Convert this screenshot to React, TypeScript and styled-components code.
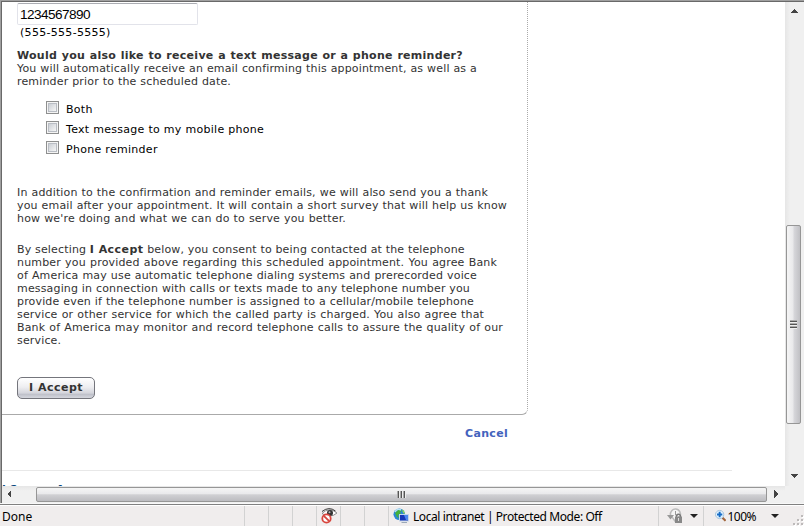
import React from "react";
import styled, { createGlobalStyle } from "styled-components";

const Global = createGlobalStyle`
  * { box-sizing: border-box; }
  html, body { margin: 0; padding: 0; overflow: hidden; }
`;

const Window = styled.div`
  width: 804px;
  height: 527px;
  display: flex;
  flex-direction: column;
  overflow: hidden;
  background: #f0eded;
`;

const Frame = styled.div`
  height: 503px;
  display: grid;
  grid-template-columns: 783px 17px;
  grid-template-rows: 484px 16px;
  border-top: 1px solid #a0a0a0;
  border-left: 1px solid #a0a0a0;
  box-shadow: inset 1px 1px 0 #696969;
  padding: 1px 0 0 1px;
  background: #f0f0f0;
`;

const Viewport = styled.main`
  background: #fff;
  overflow: hidden;
  display: flex;
  flex-direction: column;
  font: 11px/13px "DejaVu Sans", sans-serif;
  color: #333;
`;

const Panel = styled.section`
  width: 526px;
  height: 413px;
  flex: none;
  padding: 1px 0 0 15px;
  display: flex;
  flex-direction: column;
  align-items: flex-start;
  border-right: 1px dotted #aaa;
  border-bottom: 1px solid #aaa;
  border-bottom-right-radius: 6px;
`;

const PhoneInput = styled.input`
  width: 181px;
  height: 22px;
  margin: 0;
  padding: 0 2px;
  border: 1px solid #e2e3ea;
  border-top-color: #abadb3;
  border-radius: 2px;
  outline: 0;
  font: 13.6px "Liberation Sans", sans-serif;
  letter-spacing: -0.57px;
  color: #000;
`;

const Hint = styled.div`
  padding-left: 3px;
  margin-top: 1px;
  letter-spacing: 0.3px;
  color: #000;
`;

const TextBlock = styled.div<{ $gap: number }>`
  margin-top: ${(p) => p.$gap}px;
`;

const Line = styled.div<{ $w: number; $bold?: boolean }>`
  width: ${(p) => p.$w}px;
  height: 13px;
  white-space: nowrap;
  text-align: justify;
  text-align-last: justify;
  font-weight: ${(p) => (p.$bold ? 700 : 400)};
  letter-spacing: ${(p) => (p.$bold ? 0.28 : 0.16)}px;

  b {
    letter-spacing: 0.45px;
  }
`;

const Options = styled.div`
  margin: 10px 0 0 29px;
  display: flex;
  flex-direction: column;
`;

const Option = styled.label`
  height: 20px;
  display: flex;
  align-items: center;
  gap: 7px;
  letter-spacing: 0.29px;
  color: #000;
`;

const Check = styled.span`
  width: 13px;
  height: 13px;
  margin-top: -1px;
  border: 1px solid #8e8f8f;
  background: linear-gradient(135deg, #cbcfd5, #f6f6f6) content-box, #f4f4f4;
  padding: 2px;
  box-shadow: inset 0 0 0 1px #f4f4f4, inset 0 0 0 2px #b9bdc4;
`;

const OptionText = styled.span`
  padding-top: 2px;
`;

const AcceptButton = styled.button`
  width: 78px;
  height: 22px;
  margin: 30px 0 0;
  padding: 0 0 2px;
  border: 1px solid #74757c;
  border-radius: 5px;
  background: linear-gradient(#fff, #eeeef1 45%, #d4d5dc 75%, #bfc1ca 82%, #d5d7de);
  font: bold 11px/13px "DejaVu Sans", sans-serif;
  letter-spacing: 0.5px;
  color: #333;
`;

const CancelLink = styled.a`
  width: 506px;
  margin-top: 12px;
  text-align: right;
  font-weight: 700;
  letter-spacing: 0.3px;
  color: #4363bd;
`;

const Rule = styled.div`
  width: 730px;
  height: 1px;
  flex: none;
  margin-top: 30px;
  background: #e8e8e8;
`;

const Footer = styled.div`
  margin-top: 12px;
  height: 13px;
  flex: none;
  white-space: pre;
  font-weight: 700;
  color: #0a4a80;
`;

const VBar = styled.div`
  display: flex;
  flex-direction: column;
  align-items: center;
  background: linear-gradient(90deg, #e6e6e6, #f0f0f0 30%, #f0f0f0);
  padding: 5px 0 6px;
`;

const VThumb = styled.div`
  width: 15px;
  height: 199px;
  margin: 210px 0 auto;
  flex: none;
  display: flex;
  align-items: center;
  justify-content: center;
  border: 1px solid #969696;
  border-radius: 2px;
  background: linear-gradient(90deg, #f5f5f5, #e9e9eb 45%, #d6d6da 55%, #c0c0c4);
`;

const HBar = styled.div`
  display: flex;
  align-items: center;
  background: linear-gradient(#e6e6e6, #f0f0f0 30%, #f0f0f0);
  padding: 0 5px 0 4px;
`;

const HThumb = styled.div`
  width: 731px;
  height: 15px;
  margin: 0 auto 0 22px;
  flex: none;
  display: flex;
  align-items: center;
  justify-content: center;
  border: 1px solid #969696;
  border-radius: 2px;
  background: linear-gradient(#f5f5f5, #e9e9eb 45%, #d0d0d3 52%, #bcbcc0);
`;

const StatusBar = styled.footer`
  height: 24px;
  display: flex;
  border-top: 1px solid #f8f8f8;
  box-shadow: inset 0 1px 0 #808080, inset 0 2px 0 #fff, inset 0 -1px 0 #fff;
  padding-top: 2px;
  font: 12px/21px "Noto Sans", sans-serif;
  color: #000;
`;

const Cell = styled.div<{ $w: number; $line?: boolean; $pad?: number }>`
  width: ${(p) => p.$w}px;
  height: 20px;
  flex: none;
  display: flex;
  align-items: center;
  padding-left: ${(p) => p.$pad ?? 0}px;
  border-left: ${(p) => (p.$line ? "1px solid #d2d2d2" : "0")};
  white-space: nowrap;
`;

const StatusText = styled.span<{ $track?: number; $gap?: number }>`
  letter-spacing: ${(p) => p.$track ?? 0}px;
  margin-left: ${(p) => p.$gap ?? 0}px;
`;

const Drop = styled.i<{ $gap: number }>`
  margin-left: ${(p) => p.$gap}px;
  border: 4px solid transparent;
  border-top-color: #222;
  border-bottom: 0;
`;

const Arrow = ({ d }: { d: string }) => (
  <svg width="8" height="8" viewBox="0 0 8 8" shapeRendering="crispEdges"><path d={d} fill="#444" /></svg>
);

const Grip = ({ vertical }: { vertical?: boolean }) => (
  <svg width="9" height="9" viewBox="0 0 9 9" shapeRendering="crispEdges">
    <g transform={vertical ? "rotate(90 4.5 4.5)" : undefined}>
      {[0, 3, 6].map((x) => (
        <React.Fragment key={x}>
          <rect x={x} y="1" width="1" height="7" fill="#aaa" />
          <rect x={x + 1} y="1" width="1" height="7" fill="#555" />
          <rect x={x + 2} y="1" width="1" height="7" fill="#eee" />
        </React.Fragment>
      ))}
    </g>
  </svg>
);

const PrivacyIcon = () => (
  <svg width="17" height="16" viewBox="0 0 17 16">
    <path d="M1 5.500Q8-1.500 16 5Q9 11 1 5.500Z" fill="#fff" stroke="#777" strokeWidth=".8" />
    <path d="M1 3.500Q8-2 14.500 3" fill="none" stroke="#222" strokeWidth=".9" />
    <circle cx="9" cy="5" r="3" fill="#333" />
    <circle cx="8.500" cy="4.200" r="1" fill="#bbb" />
    <circle cx="5.500" cy="10.500" r="4.200" fill="#fff" stroke="#d8453d" strokeWidth="1.800" />
    <path d="M2.800 7.800L8.200 13.200" stroke="#d8453d" strokeWidth="1.800" />
  </svg>
);

const IntranetIcon = () => (
  <svg width="16" height="16" viewBox="0 0 16 16">
    <circle cx="6.300" cy="6.300" r="5.800" fill="#2c88d4" />
    <path d="M6 1L9 3L7 4L8 6L5 7L6 10L4 9L2 5Z" fill="#45b13b" />
    <path d="M9 1Q12 3 12 6L10 5Z" fill="#8bd852" />
    <path d="M2 4Q4 0 8 2" stroke="#b9e2f5" strokeWidth="1.500" fill="none" />
    <rect x="6.500" y="6.500" width="9" height="6.500" fill="#1637b8" stroke="#c5d5e8" />
    <path d="M11 7H15V12H13Z" fill="#4c86ef" />
    <path d="M9 14H14V15H8Z" fill="#9ba8b8" />
  </svg>
);

const SecurityIcon = () => (
  <svg width="16" height="16" viewBox="0 0 16 16">
    <path d="M3.500 7A5 5 0 1 1 13 8L8 13Z" fill="#f5f5f5" stroke="#bbb" strokeWidth="1.500" />
    <path d="M0 7H7L3.500 11.500Z" fill="#999" />
    <path d="M8.500 3V7H11" stroke="#999" fill="none" />
    <path d="M9.500 9V7.500Q11.500 5 13.500 7.500V9" fill="none" stroke="#777" strokeWidth="1.300" />
    <rect x="8" y="8.500" width="7" height="6.500" fill="#888" />
    <path d="M11.500 10V13" stroke="#ddd" />
  </svg>
);

const ZoomIcon = () => (
  <svg width="13" height="14" viewBox="0 0 13 14">
    <path d="M8.500 9L12 12.500" stroke="#a2663d" strokeWidth="2.500" />
    <circle cx="5.300" cy="5.300" r="4.700" fill="#e5f4ff" stroke="#9fbdd5" />
    <path d="M5.300 2.300V8.300M2.300 5.300H8.300" stroke="#176cc5" strokeWidth="2.200" />
  </svg>
);

const ResizeGrip = () => (
  <svg width="11" height="11" viewBox="0 0 11 11" shapeRendering="crispEdges">
    {[[8, 0], [4, 4], [8, 4], [0, 8], [4, 8], [8, 8]].map(([x, y]) => (
      <React.Fragment key={`${x}-${y}`}>
        <rect x={x + 1} y={y + 1} width="2" height="2" fill="#fff" />
        <rect x={x} y={y} width="2" height="2" fill="#bdbaba" />
      </React.Fragment>
    ))}
  </svg>
);

const Corner = styled.div`
  display: flex;
  align-self: flex-end;
  margin-left: 14px;
`;

const surveyLines: [number, string][] = [
  [471, "In addition to the confirmation and reminder emails, we will also send you a thank"],
  [490, "you email after your appointment. It will contain a short survey that will help us know"],
  [329, "how we're doing and what we can do to serve you better."],
];

const consentLines: [number, React.ReactNode][] = [
  [447, <>By selecting <b>I Accept</b> below, you consent to being contacted at the telephone</>],
  [480, "number you provided above regarding this scheduled appointment. You agree Bank"],
  [460, "of America may use automatic telephone dialing systems and prerecorded voice"],
  [453, "messaging in connection with calls or texts made to any telephone number you"],
  [457, "provide even if the telephone number is assigned to a cellular/mobile telephone"],
  [467, "service or other service for which the called party is charged. You also agree that"],
  [486, "Bank of America may monitor and record telephone calls to assure the quality of our"],
  [45, "service."],
];

export default function App() {
  return (
    <Window>
      <Global />
      <Frame>
        <Viewport>
          <Panel>
            <PhoneInput defaultValue="1234567890" />
            <Hint>(555-555-5555)</Hint>
            <TextBlock $gap={10}>
              <Line $w={446} $bold>Would you also like to receive a text message or a phone reminder?</Line>
              <Line $w={460}>You will automatically receive an email confirming this appointment, as well as a</Line>
              <Line $w={214}>reminder prior to the scheduled date.</Line>
            </TextBlock>
            <Options>
              {["Both", "Text message to my mobile phone", "Phone reminder"].map((t) => (
                <Option key={t}><Check /><OptionText>{t}</OptionText></Option>
              ))}
            </Options>
            <TextBlock $gap={28}>
              {surveyLines.map(([w, t], i) => <Line key={i} $w={w}>{t}</Line>)}
            </TextBlock>
            <TextBlock $gap={18}>
              {consentLines.map(([w, t], i) => <Line key={i} $w={w}>{t}</Line>)}
            </TextBlock>
            <AcceptButton>I Accept</AcceptButton>
          </Panel>
          <CancelLink>Cancel</CancelLink>
          <Rule />
          <Footer>l Secure Area</Footer>
        </Viewport>
        <VBar>
          <Arrow d="M4 2L8 6H0Z" />
          <VThumb><Grip vertical /></VThumb>
          <Arrow d="M0 2H8L4 6Z" />
        </VBar>
        <HBar>
          <Arrow d="M5 0V8L1 4Z" />
          <HThumb><Grip /></HThumb>
          <Arrow d="M2 0L6 4L2 8Z" />
        </HBar>
      </Frame>
      <StatusBar>
        <Cell $w={244} $pad={2}><StatusText>Done</StatusText></Cell>
        <Cell $w={24} $line />
        <Cell $w={24} $line />
        <Cell $w={24} $line />
        <Cell $w={24} $line $pad={4}><PrivacyIcon /></Cell>
        <Cell $w={24} $line />
        <Cell $w={24} $line />
        <Cell $w={270} $line $pad={4}>
          <IntranetIcon />
          <StatusText $gap={4} $track={-0.42}>Local intranet | Protected Mode: Off</StatusText>
        </Cell>
        <Cell $w={45} $line $pad={8}><SecurityIcon /><Drop $gap={7} /></Cell>
        <Cell $w={101} $line $pad={11}>
          <ZoomIcon />
          <StatusText $gap={1} $track={-0.5}>100%</StatusText>
          <Drop $gap={15} />
          <Corner><ResizeGrip /></Corner>
        </Cell>
      </StatusBar>
    </Window>
  );
}
